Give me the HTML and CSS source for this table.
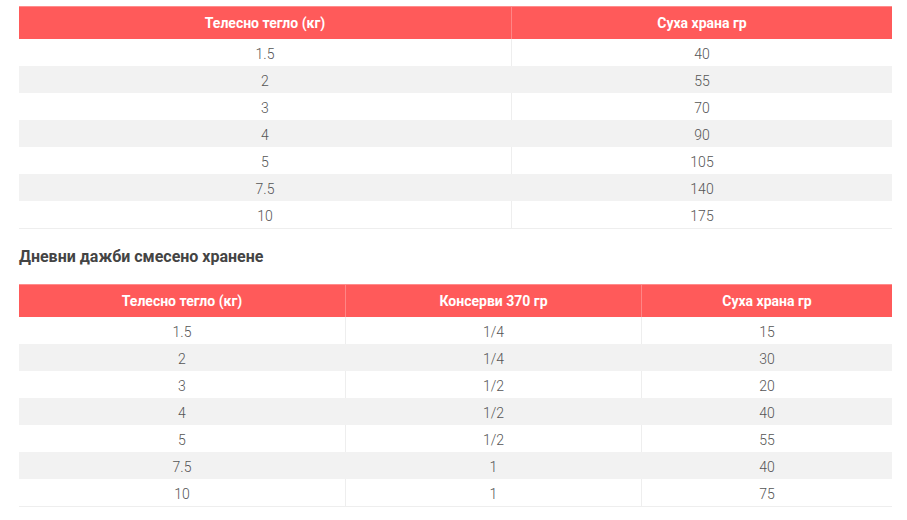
FILE: index.html
```html
<!DOCTYPE html>
<html lang="bg">
<head>
<meta charset="utf-8">
<link rel="stylesheet" href="styles.css">
</head>
<body>
<div class="content">
  <table class="feed t1">
    <thead>
      <tr><th>Телесно тегло (кг)</th><th>Суха храна гр</th></tr>
    </thead>
    <tbody>
      <tr><td>1.5</td><td>40</td></tr>
      <tr><td>2</td><td>55</td></tr>
      <tr><td>3</td><td>70</td></tr>
      <tr><td>4</td><td>90</td></tr>
      <tr><td>5</td><td>105</td></tr>
      <tr><td>7.5</td><td>140</td></tr>
      <tr><td>10</td><td>175</td></tr>
    </tbody>
  </table>
  <h4 class="title">Дневни дажби смесено хранене</h4>
  <table class="feed t2">
    <thead>
      <tr><th>Телесно тегло (кг)</th><th>Консерви 370 гр</th><th>Суха храна гр</th></tr>
    </thead>
    <tbody>
      <tr><td>1.5</td><td>1/4</td><td>15</td></tr>
      <tr><td>2</td><td>1/4</td><td>30</td></tr>
      <tr><td>3</td><td>1/2</td><td>20</td></tr>
      <tr><td>4</td><td>1/2</td><td>40</td></tr>
      <tr><td>5</td><td>1/2</td><td>55</td></tr>
      <tr><td>7.5</td><td>1</td><td>40</td></tr>
      <tr><td>10</td><td>1</td><td>75</td></tr>
    </tbody>
  </table>
</div>
</body>
</html>
```
FILE: styles.css
```css
html, body {
  margin: 0;
  padding: 0;
  background: #fff;
}
body {
  font-family: Roboto, "Liberation Sans", Arial, sans-serif;
  color: #555;
}
.content {
  width: 873px;
  padding: 6px 0 0 19px;
}
.feed {
  width: 873px;
  border-collapse: collapse;
  border-spacing: 0;
}
.feed th {
  background: #ff5a5a;
  color: #fff;
  font-size: 14px;
  font-weight: 700;
  line-height: 16px;
  height: 16px;
  padding: 8px 10px 8px;
  border-top: 1px solid #ff8c8c;
  border-left: 1px solid #ff8585;
  text-align: center;
}
.feed th:first-child { border-left: none; }
.feed td {
  font-size: 14px;
  font-weight: 300;
  line-height: 16px;
  height: 16px;
  padding: 7px 10px 4px;
  text-align: center;
  border-left: 1px solid #eeeeee;
  color: #555;
}
.feed td:first-child { border-left: none; }
.feed tbody tr:nth-child(even) td {
  background: #f2f2f2;
  border-left-color: #f2f2f2;
}
.feed tbody tr:last-child td {
  border-bottom: 1px solid #eeeeee;
}
.t1 th:first-child, .t1 td:first-child { width: 472px; }
.t2 th:first-child, .t2 td:first-child { width: 306px; }
.t2 th:nth-child(2), .t2 td:nth-child(2) { width: 275px; }
.title {
  margin: 18px 0 17px;
  font-size: 16px;
  font-weight: 700;
  line-height: 20px;
  color: #444;
}
```
